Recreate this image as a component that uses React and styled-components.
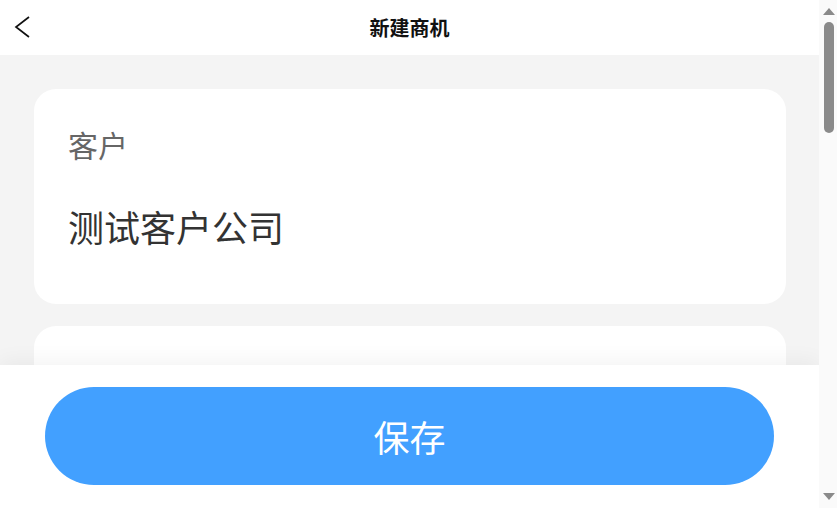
import styled, { createGlobalStyle } from "styled-components";

const GlobalStyle = createGlobalStyle`
  html, body {
    margin: 0;
    padding: 0;
    height: 100%;
    overflow: hidden;
    background: #f4f4f4;
    font-family: "Noto Sans CJK SC", "Noto Sans", sans-serif;
  }
`;

const Shell = styled.div`
  display: flex;
  height: 100vh;
`;

const Main = styled.div`
  flex: 1;
  position: relative;
  overflow: hidden;
  background: #f4f4f4;
`;

const Header = styled.header`
  height: 55px;
  background: #fff;
  display: flex;
  align-items: center;
  justify-content: center;
  position: relative;
`;

const BackButton = styled.button`
  position: absolute;
  left: 10px;
  top: 13px;
  width: 28px;
  height: 28px;
  border: none;
  background: none;
  padding: 0;
  cursor: pointer;
`;

const Title = styled.h1`
  margin: 0;
  font-size: 20px;
  font-weight: 700;
  color: #111;
`;

const Content = styled.main`
  padding: 34px 33px 0 34px;
  display: flex;
  flex-direction: column;
  gap: 22px;
`;

const Card = styled.section`
  background: #fff;
  border-radius: 22px;
  padding: 34px 34px 0;
  height: 215px;
  box-sizing: border-box;
`;

const Label = styled.div`
  font-size: 30px;
  line-height: 42px;
  color: #666;
`;

const Value = styled.div`
  margin-top: 36px;
  font-size: 36px;
  line-height: 50px;
  color: #333;
`;

const Footer = styled.footer`
  position: absolute;
  left: 0;
  right: 0;
  bottom: 0;
  height: 143px;
  background: #fff;
  box-shadow: 0 -4px 20px rgba(0, 0, 0, 0.05);
  padding: 22px 45px 0;
  box-sizing: border-box;
`;

const SaveButton = styled.button`
  width: 100%;
  height: 98px;
  border: none;
  border-radius: 49px;
  background: #42a0ff;
  color: #fff;
  font-family: inherit;
  font-size: 36px;
  cursor: pointer;
`;

const ScrollTrack = styled.aside`
  width: 18px;
  background: #fafafa;
  display: flex;
  flex-direction: column;
  align-items: center;
  padding: 8px 0 8px 1px;
  box-sizing: border-box;
`;

const ScrollArrow = styled.svg`
  display: block;
  flex-shrink: 0;
  margin-top: ${(p) => (p.$down ? "auto" : "0")};
`;

const ScrollThumb = styled.div`
  width: 10px;
  height: 111px;
  margin-top: 7px;
  border-radius: 5px;
  background: #8a8a8a;
`;

const fields = [
  { label: "客户", value: "测试客户公司" },
  { label: "商机名称", value: "" },
];

export default function App() {
  return (
    <Shell>
      <GlobalStyle />
      <Main>
        <Header>
          <BackButton aria-label="返回">
            <svg width="28" height="28" viewBox="0 0 28 28" fill="none">
              <path d="M19 4 L6 14 L19 24" stroke="#111" strokeWidth="1.7" />
            </svg>
          </BackButton>
          <Title>新建商机</Title>
        </Header>
        <Content>
          {fields.map((f) => (
            <Card key={f.label}>
              <Label>{f.label}</Label>
              <Value>{f.value || "\u00a0"}</Value>
            </Card>
          ))}
        </Content>
        <Footer>
          <SaveButton>保存</SaveButton>
        </Footer>
      </Main>
      <ScrollTrack>
        <ScrollArrow width="12" height="7" viewBox="0 0 12 7">
          <path d="M6 0 L12 7 L0 7 Z" fill="#8a8a8a" />
        </ScrollArrow>
        <ScrollThumb />
        <ScrollArrow $down width="12" height="7" viewBox="0 0 12 7">
          <path d="M0 0 L12 0 L6 7 Z" fill="#8a8a8a" />
        </ScrollArrow>
      </ScrollTrack>
    </Shell>
  );
}
